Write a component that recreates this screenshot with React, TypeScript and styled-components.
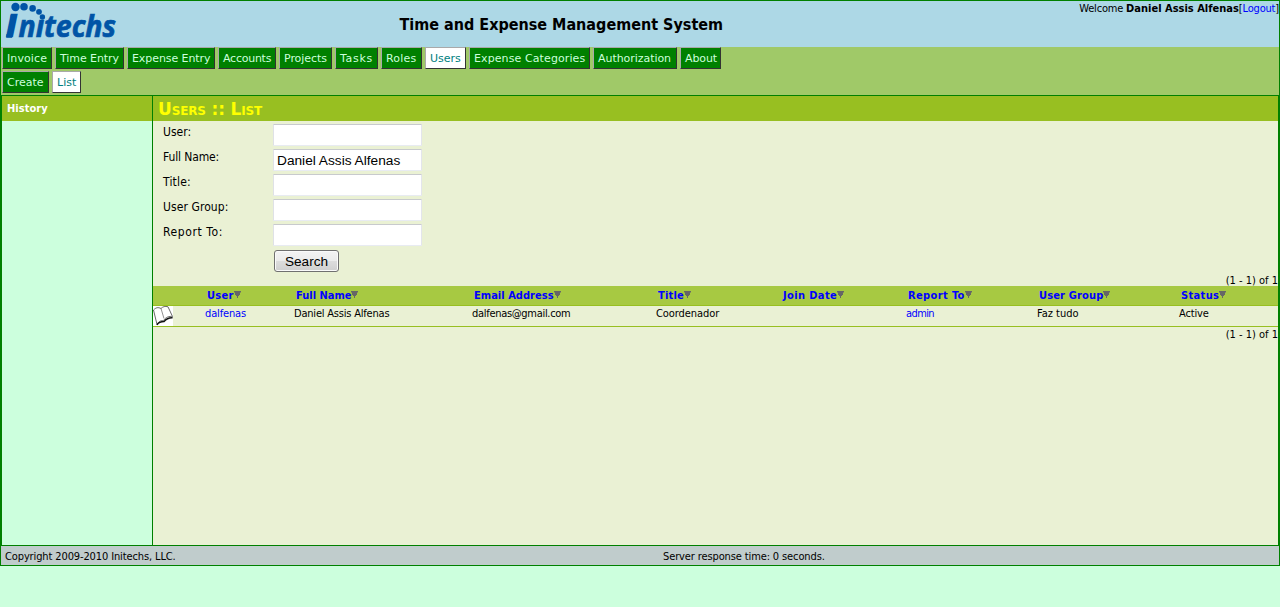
import React from "react";
import styled, { createGlobalStyle } from "styled-components";

const narrow = '"DejaVu Sans Condensed", "DejaVu Sans", sans-serif';
const wide = '"DejaVu Sans", sans-serif';

const GlobalStyle = createGlobalStyle`
  * { box-sizing: border-box; }
  body {
    margin: 0;
    background: #ccffdd;
    font: 11px/14px ${narrow};
    letter-spacing: -0.12px;
    color: #000;
    overflow: hidden;
  }
`;

const Frame = styled.div`
  display: flex;
  flex-direction: column;
  height: 566px;
  border: 1px solid #008000;
`;

const Header = styled.header`
  display: grid;
  grid-template-columns: 398.5px auto 1fr;
  height: 46px;
  flex: none;
  background: #add8e6;
`;

const Logo = styled.svg`
  display: block;
  width: 120px;
  height: 46px;
  overflow: visible;
`;

const SystemTitle = styled.h1`
  margin: 0;
  padding-top: 13px;
  font: bold 16px/21px ${narrow};
  letter-spacing: 0;
`;

const Welcome = styled.div`
  justify-self: end;
  white-space: pre;
  line-height: 15px;
  letter-spacing: -0.18px;
  & > b { letter-spacing: 0; }
`;

const Link = styled.a`
  color: #0000ff;
  text-decoration: none;
`;

const Navigation = styled.nav`
  display: flex;
  flex-direction: column;
  gap: 2px;
  height: 48px;
  flex: none;
  padding-left: 1px;
  background: #a0c968;
`;

const TabRow = styled.div`
  display: flex;
  gap: 3px;
`;

const Tab = styled.a<{ $width: number; $spacing?: number; $active?: boolean }>`
  width: ${(p) => p.$width}px;
  height: 22px;
  padding-left: 4px;
  border: 1px solid;
  border-color: #a9a9a9 #333 #333 #a9a9a9;
  background: ${(p) => (p.$active ? "#fff" : "#008000")};
  color: ${(p) => (p.$active ? "#008080" : "#ccffdd")};
  font: 11px/21px ${wide};
  letter-spacing: ${(p) => p.$spacing ?? 0}px;
  white-space: nowrap;
`;

const Body = styled.div`
  display: flex;
  flex: 1;
  border: 1px solid #008000;
`;

const Sidebar = styled.aside`
  width: 151px;
  flex: none;
  border-right: 1px solid #008000;
`;

const SidebarTitle = styled.h2`
  height: 25px;
  margin: 0;
  padding-left: 5px;
  background: #98bf21;
  color: #fff;
  font: bold 11px/26px ${narrow};
  letter-spacing: 0.05px;
`;

const Content = styled.main`
  flex: 1;
  background: #eaf1d4;
`;

const PageTitle = styled.h2`
  height: 25px;
  margin: 0;
  padding-left: 5px;
  background: #98bf21;
  color: #ffff00;
  font: small-caps bold 17px/26px ${wide};
  letter-spacing: -0.15px;
`;

const SearchForm = styled.form`
  display: flex;
  flex-direction: column;
  gap: 3px;
  height: 153px;
  padding: 3px 0 0 10px;
`;

const Field = styled.label`
  display: flex;
  height: 22px;
`;

const FieldLabel = styled.span<{ $spacing: number }>`
  width: 110px;
  font-size: 12px;
  line-height: 17px;
  letter-spacing: ${(p) => p.$spacing}px;
`;

const TextInput = styled.input`
  width: 149px;
  height: 22px;
  padding: 1px 3px 0;
  border: 1px solid;
  border-color: #c8cacd #e3e5ec #e8ebf2 #dfe1e6;
  border-radius: 1px;
  background: #fff;
  font: 13.7px "Liberation Sans", sans-serif;
  outline: none;
`;

const SearchButton = styled.button`
  width: 65px;
  height: 22px;
  margin: 1px 0 0 111px;
  padding: 1px 0 0;
  border: 1px solid #707070;
  border-radius: 3px;
  background: linear-gradient(#f3f3f3, #ebebeb 50%, #dddddd 50%, #cfcfcf);
  box-shadow: inset 0 0 0 1px #fafafa;
  font: 13.6px/18px "Liberation Sans", sans-serif;
  color: #000;
`;

const PageCount = styled.div<{ $after?: boolean }>`
  height: 12px;
  margin-top: ${(p) => (p.$after ? 1 : 0)}px;
  text-align: right;
  line-height: 13px;
  letter-spacing: 0;
`;

const columns = "52px 89px 178px 184px 125px 125px 131px 142px 1fr";

const HeadRow = styled.div`
  display: grid;
  grid-template-columns: ${columns};
  height: 20px;
  border-bottom: 1px solid #98bf21;
  background: #a7c942;
`;

const HeadCell = styled.a<{ $spacing: number }>`
  display: flex;
  padding-left: 2px;
  color: #0000ff;
  font: bold 11px/20px ${narrow};
  letter-spacing: ${(p) => p.$spacing}px;
`;

const SortArrow = styled.svg`
  width: 7px;
  height: 7px;
  margin-top: 5px;
`;

const DataRow = styled.div`
  display: grid;
  grid-template-columns: ${columns};
  height: 21px;
  border-bottom: 1px solid #98bf21;
`;

const Cell = styled.div<{ $spacing?: number }>`
  line-height: 15px;
  letter-spacing: ${(p) => p.$spacing ?? -0.15}px;
`;

const BookIcon = styled.svg`
  display: block;
  width: 20px;
  height: 20px;
  background: #fff;
`;

const Footer = styled.footer`
  display: flex;
  height: 19px;
  flex: none;
  padding-left: 4px;
  background: #c0cccc;
  line-height: 21px;
`;

const Copyright = styled.span`
  width: 658px;
`;

type TabItem = { label: string; width: number; spacing?: number; active?: boolean };

const mainTabs: TabItem[] = [
  { label: "Invoice", width: 50, spacing: 0.1 },
  { label: "Time Entry", width: 69, spacing: -0.07 },
  { label: "Expense Entry", width: 88, spacing: -0.08 },
  { label: "Accounts", width: 58, spacing: -0.25 },
  { label: "Projects", width: 53, spacing: -0.05 },
  { label: "Tasks", width: 43, spacing: 0.7 },
  { label: "Roles", width: 41, spacing: 0.2 },
  { label: "Users", width: 41, active: true },
  { label: "Expense Categories", width: 121, spacing: 0.1 },
  { label: "Authorization", width: 84, spacing: -0.05 },
  { label: "About", width: 41, spacing: -0.1 },
];

const subTabs: TabItem[] = [
  { label: "Create", width: 47 },
  { label: "List", width: 29, active: true },
];

const fields = [
  { label: "User:", value: "", spacing: 0 },
  { label: "Full Name:", value: "Daniel Assis Alfenas", spacing: -0.12 },
  { label: "Title:", value: "", spacing: 0.2 },
  { label: "User Group:", value: "", spacing: 0.08 },
  { label: "Report To:", value: "", spacing: 0.6 },
];

const headings = [
  { label: "User", spacing: 0.3 },
  { label: "Full Name", spacing: 0 },
  { label: "Email Address", spacing: 0.03 },
  { label: "Title", spacing: 0.2 },
  { label: "Join Date", spacing: 0.38 },
  { label: "Report To", spacing: 0.38 },
  { label: "User Group", spacing: 0.15 },
  { label: "Status", spacing: 0.35 },
];

const Tabs = ({ items }: { items: TabItem[] }) => (
  <TabRow>
    {items.map((t) => (
      <Tab key={t.label} $width={t.width} $spacing={t.spacing} $active={t.active}>
        {t.label}
      </Tab>
    ))}
  </TabRow>
);

const BrandLogo = () => (
  <Logo viewBox="1 1 120 46" fill="#0054a6" aria-label="Initechs">
    <circle cx="15.5" cy="7" r="4.2" />
    <circle cx="24" cy="6.7" r="3.8" />
    <circle cx="32.6" cy="8.4" r="3.3" />
    <circle cx="39" cy="11.8" r="2.9" />
    <circle cx="42.4" cy="17" r="2.7" />
    <path d="M10.5 17H16M6.3 36H12" stroke="#0054a6" strokeWidth="3.4" />
    <g fontFamily='"Open Sans", sans-serif' fontWeight="bold" fontStyle="italic" letterSpacing="0">
      <text x="6.8" y="36.3" fontSize="28.5" stroke="#0054a6" strokeWidth="2.6">I</text>
      <text x="18.5" y="37.3" fontSize="30.5" stroke="#0054a6" strokeWidth="0.7" textLength="97.5" lengthAdjust="spacingAndGlyphs">nıtechs</text>
    </g>
  </Logo>
);

const App = () => (
  <>
    <GlobalStyle />
    <Frame>
      <Header>
        <BrandLogo />
        <SystemTitle>Time and Expense Management System</SystemTitle>
        <Welcome>
          Welcome <b>Daniel Assis Alfenas</b>[<Link>Logout</Link>]
        </Welcome>
      </Header>
      <Navigation>
        <Tabs items={mainTabs} />
        <Tabs items={subTabs} />
      </Navigation>
      <Body>
        <Sidebar>
          <SidebarTitle>History</SidebarTitle>
        </Sidebar>
        <Content>
          <PageTitle>Users :: List</PageTitle>
          <SearchForm>
            {fields.map((f) => (
              <Field key={f.label}>
                <FieldLabel $spacing={f.spacing}>{f.label}</FieldLabel>
                <TextInput defaultValue={f.value} />
              </Field>
            ))}
            <SearchButton type="button">Search</SearchButton>
          </SearchForm>
          <PageCount>(1 - 1) of 1</PageCount>
          <HeadRow>
            <span />
            {headings.map((h) => (
              <HeadCell key={h.label} $spacing={h.spacing}>
                {h.label}
                <SortArrow viewBox="0 0 7 7" fill="#666">
                  <path d="M0 0H7V1L6 2V4H5V5H4V7H3V5H2V4H1V2L0 1Z" />
                </SortArrow>
              </HeadCell>
            ))}
          </HeadRow>
          <DataRow>
            <BookIcon viewBox="0 0 20 20" fill="none" stroke="#444" strokeWidth="0.8">
              <path d="M0.5 4L4 18.5C6 15 8 14.5 10.5 14.5C13 11 16 10 19.5 10.5L15 0.8C12 0 10 0.5 8 2.5C5 1 3 1.5 0.5 4Z" />
              <path d="M8 2.5L11 12.5" stroke="#777" />
              <path d="M4 18.8C6 15.8 8 15.6 11 15.6C13.5 12.5 16 11.6 19.6 11.8" stroke="#111" strokeWidth="1.5" />
            </BookIcon>
            <Cell><Link>dalfenas</Link></Cell>
            <Cell $spacing={-0.2}>Daniel Assis Alfenas</Cell>
            <Cell $spacing={-0.3}>dalfenas@gmail.com</Cell>
            <Cell $spacing={-0.08}>Coordenador</Cell>
            <Cell />
            <Cell $spacing={-0.6}><Link>admin</Link></Cell>
            <Cell $spacing={0}>Faz tudo</Cell>
            <Cell>Active</Cell>
          </DataRow>
          <PageCount $after>(1 - 1) of 1</PageCount>
        </Content>
      </Body>
      <Footer>
        <Copyright>Copyright 2009-2010 Initechs, LLC.</Copyright>
        <span>Server response time: 0 seconds.</span>
      </Footer>
    </Frame>
  </>
);

export default App;
